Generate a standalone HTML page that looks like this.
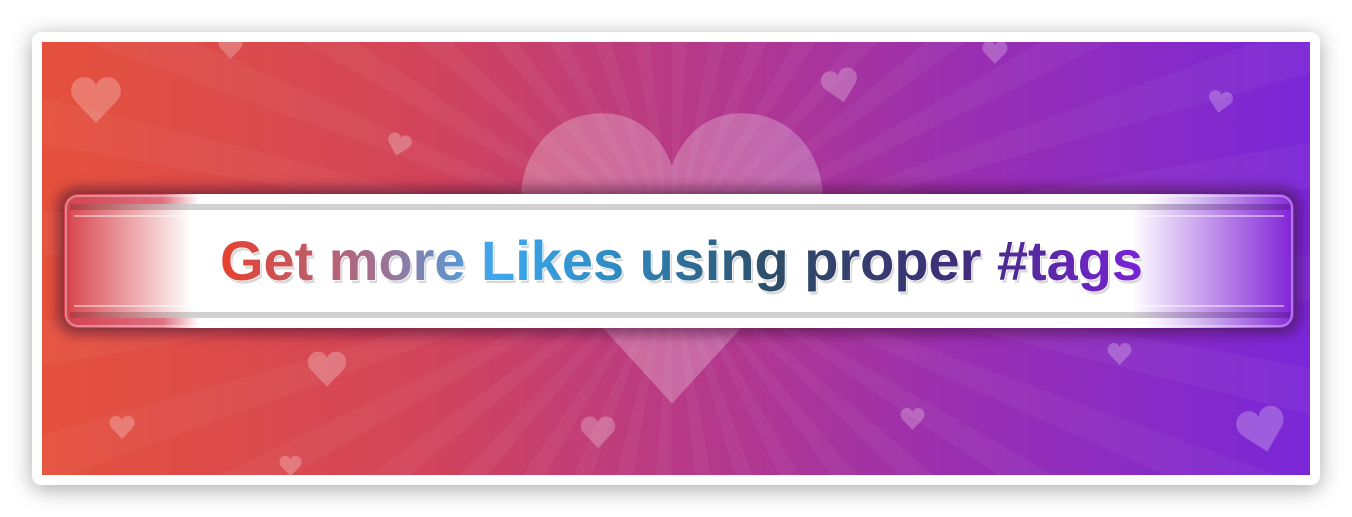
<!DOCTYPE html>
<html><head><style>
html,body{margin:0;padding:0;background:#fff;width:1352px;height:517px;overflow:hidden}
.card{position:absolute;left:32px;top:32px;width:1288px;height:453px;background:#fff;border-radius:9px;box-shadow:0 4px 22px rgba(0,0,0,.35)}
svg{position:absolute;left:0;top:0}
</style></head><body>
<div class="card"></div>
<svg width="1352" height="517" viewBox="0 0 1352 517">
<defs>
<linearGradient id="bg" x1="0" x2="1" y1="0" y2="0">
<stop offset="0" stop-color="#e5513c"/><stop offset="0.3" stop-color="#d2445a"/>
<stop offset="0.5" stop-color="#b83a86"/><stop offset="0.72" stop-color="#9a2fb0"/>
<stop offset="1" stop-color="#7a27d8"/></linearGradient>
<linearGradient id="tg" x1="220" x2="1143" y1="0" y2="0" gradientUnits="userSpaceOnUse">
<stop offset="0" stop-color="#e8402e"/><stop offset="0.17" stop-color="#a27090"/>
<stop offset="0.3" stop-color="#3ca8f0"/><stop offset="0.43" stop-color="#2f8ac0"/>
<stop offset="0.6" stop-color="#2e4c66"/><stop offset="0.8" stop-color="#3e2e78"/>
<stop offset="1" stop-color="#7a22d8"/></linearGradient>
<linearGradient id="bar" x1="0" x2="1" y1="0" y2="0">
<stop offset="0" stop-color="#d94a52"/><stop offset="0.1" stop-color="#fff" stop-opacity="1"/>
<stop offset="0.87" stop-color="#fff"/><stop offset="1" stop-color="#8428d8"/></linearGradient>
<linearGradient id="barl" x1="0" x2="1" y1="0" y2="0">
<stop offset="0" stop-color="#d4414e"/><stop offset="0.08" stop-color="#e07080"/><stop offset="0.11" stop-color="#fff"/>
<stop offset="0.88" stop-color="#fff"/><stop offset="0.92" stop-color="#d8c0f2"/><stop offset="1" stop-color="#8428d8"/></linearGradient>
<path id="h" d="M50,92 L10,50 C-6,32 4,4 28,4 C40,4 47,12 50,20 C53,12 60,4 72,4 C96,4 106,32 90,50 Z"/>
<path id="r" d="M672,255 L1872,255 L1872,340 Z"/>
<clipPath id="c"><rect x="42" y="42" width="1268" height="433"/></clipPath>
<filter id="bl"><feGaussianBlur stdDeviation="6"/></filter>
</defs>
<g clip-path="url(#c)">
<rect x="42" y="42" width="1268" height="433" fill="url(#bg)"/>
<g fill="#fff" opacity="0.035">
<use href="#r" transform="rotate(0 672 255)"/><use href="#r" transform="rotate(10 672 255)"/><use href="#r" transform="rotate(20 672 255)"/><use href="#r" transform="rotate(30 672 255)"/><use href="#r" transform="rotate(40 672 255)"/><use href="#r" transform="rotate(50 672 255)"/><use href="#r" transform="rotate(60 672 255)"/><use href="#r" transform="rotate(70 672 255)"/><use href="#r" transform="rotate(80 672 255)"/><use href="#r" transform="rotate(90 672 255)"/><use href="#r" transform="rotate(100 672 255)"/><use href="#r" transform="rotate(110 672 255)"/><use href="#r" transform="rotate(120 672 255)"/><use href="#r" transform="rotate(130 672 255)"/><use href="#r" transform="rotate(140 672 255)"/><use href="#r" transform="rotate(150 672 255)"/><use href="#r" transform="rotate(160 672 255)"/><use href="#r" transform="rotate(170 672 255)"/><use href="#r" transform="rotate(180 672 255)"/><use href="#r" transform="rotate(190 672 255)"/><use href="#r" transform="rotate(200 672 255)"/><use href="#r" transform="rotate(210 672 255)"/><use href="#r" transform="rotate(220 672 255)"/><use href="#r" transform="rotate(230 672 255)"/><use href="#r" transform="rotate(240 672 255)"/><use href="#r" transform="rotate(250 672 255)"/><use href="#r" transform="rotate(260 672 255)"/><use href="#r" transform="rotate(270 672 255)"/><use href="#r" transform="rotate(280 672 255)"/><use href="#r" transform="rotate(290 672 255)"/><use href="#r" transform="rotate(300 672 255)"/><use href="#r" transform="rotate(310 672 255)"/><use href="#r" transform="rotate(320 672 255)"/><use href="#r" transform="rotate(330 672 255)"/><use href="#r" transform="rotate(340 672 255)"/><use href="#r" transform="rotate(350 672 255)"/>
</g>
<g fill="#fff" opacity="0.25">
<use href="#h" transform="translate(514,100) scale(3.16,3.3)" opacity="1.1"/>
<use href="#h" transform="translate(70,75) scale(0.52)"/>
<use href="#h" transform="translate(218,36) scale(0.25)"/>
<use href="#h" transform="translate(390,130) rotate(15) scale(0.25)"/>
<use href="#h" transform="translate(818,72) rotate(-12) scale(0.38)"/>
<use href="#h" transform="translate(982,40) scale(0.26)"/>
<use href="#h" transform="translate(1210,88) rotate(10) scale(0.25)"/>
<use href="#h" transform="translate(307,350) scale(0.4)"/>
<use href="#h" transform="translate(109,415) scale(0.26)"/>
<use href="#h" transform="translate(279,455) scale(0.23)"/>
<use href="#h" transform="translate(580,415) scale(0.36)"/>
<use href="#h" transform="translate(900,407) scale(0.25)"/>
<use href="#h" transform="translate(1107,342) scale(0.25)"/>
<use href="#h" transform="translate(1232,413) rotate(-14) scale(0.5)"/>
</g>
<rect x="58" y="188" width="1242" height="146" rx="18" fill="#3a1030" opacity="0.55" filter="url(#bl)"/>
<rect x="64" y="194" width="1230" height="134" rx="14" fill="url(#barl)"/>
<rect x="66" y="196" width="1226" height="130" rx="12" fill="none" stroke="#fff" stroke-opacity="0.35" stroke-width="2"/>
<rect x="70" y="204" width="1220" height="114" fill="url(#bar)"/>
<rect x="70" y="204" width="1220" height="6" fill="#000" opacity="0.18"/>
<rect x="70" y="312" width="1220" height="6" fill="#000" opacity="0.18"/>
<line x1="74" y1="216" x2="1284" y2="216" stroke="#fff" stroke-opacity="0.45" stroke-width="2"/>
<line x1="74" y1="306" x2="1284" y2="306" stroke="#fff" stroke-opacity="0.45" stroke-width="2"/>
</g>
<text x="222" y="283" textLength="923" lengthAdjust="spacingAndGlyphs" font-family="Liberation Sans, sans-serif" font-weight="bold" font-size="56" fill="#d8d8d8">Get more Likes using proper #tags</text>
<text x="220" y="280" textLength="923" lengthAdjust="spacingAndGlyphs" font-family="Liberation Sans, sans-serif" font-weight="bold" font-size="56" fill="url(#tg)" stroke="#fff" stroke-width="1.5" paint-order="stroke">Get more Likes using proper #tags</text>
</svg>
</body></html>
